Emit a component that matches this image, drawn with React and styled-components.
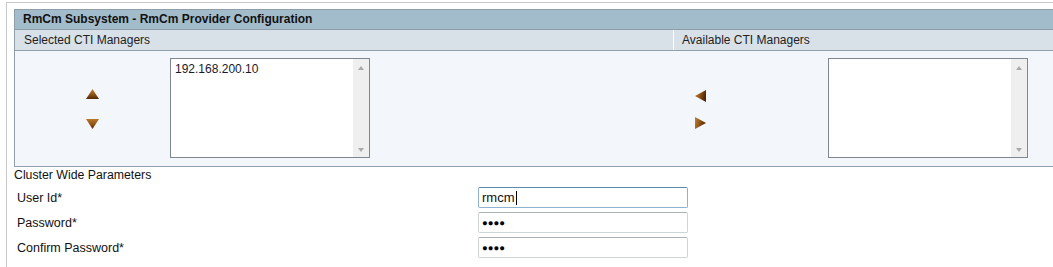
import React from 'react'
import styled, { createGlobalStyle } from 'styled-components'

const Global = createGlobalStyle`
  html, body { margin: 0; padding: 0; background: #fff; overflow: hidden; }
  body { font-family: "Liberation Sans", Arial, sans-serif; font-size: 12px; color: #111; }
`

function Arrow({ dir }) {
  const pts = {
    up: '6.5,0 13,10 0,10',
    down: '0,0 13,0 6.5,10',
    left: '11,0 11,12 0,6',
    right: '0,0 11,6 0,12',
  }[dir]
  const vertical = dir === 'up' || dir === 'down'
  const w = vertical ? 13 : 11
  const h = vertical ? 10 : 12
  const id = 'g-' + dir
  return (
    <svg width={w} height={h} viewBox={`0 0 ${w} ${h}`}>
      <defs>
        <linearGradient id={id} x1="0" y1="0" x2={vertical ? '0' : '1'} y2={vertical ? '1' : '0.3'}>
          <stop offset="0" stopColor={dir === 'down' ? '#b87828' : '#c4823a'} />
          <stop offset="0.55" stopColor="#8e5214" />
          <stop offset="1" stopColor="#4f2804" />
        </linearGradient>
      </defs>
      <polygon points={pts} fill={`url(#${id})`} />
    </svg>
  )
}

function ListBox({ items }) {
  return (
    <Box>
      <Items>
        {items.map((i) => (
          <div key={i}>{i}</div>
        ))}
      </Items>
      <Scroll>
        <Tri $up />
        <Tri />
      </Scroll>
    </Box>
  )
}

function App() {
  return (
    <>
      <Global />
      <Frame>
        <Table>
          <Header>RmCm Subsystem - RmCm Provider Configuration</Header>
          <SubRow>
            <SubCell>Selected CTI Managers</SubCell>
            <SubCell $divider>Available CTI Managers</SubCell>
          </SubRow>
          <Content>
            <Pane>
              <Arrows $gap={20}>
                <Arrow dir="up" />
                <Arrow dir="down" />
              </Arrows>
              <ListBox items={['192.168.200.10']} />
            </Pane>
            <Pane>
              <Arrows $gap={15} $left={22}>
                <Arrow dir="left" />
                <Arrow dir="right" />
              </Arrows>
              <ListBox items={[]} />
            </Pane>
          </Content>
        </Table>
        <Section>Cluster Wide Parameters</Section>
        <Form>
          <Label>User Id*</Label>
          <Field $focus>
            rmcm<Caret />
          </Field>
          <Label>Password*</Label>
          <Field>
            <Dots>●●●●</Dots>
          </Field>
          <Label>Confirm Password*</Label>
          <Field>
            <Dots>●●●●</Dots>
          </Field>
        </Form>
      </Frame>
    </>
  )
}

const Frame = styled.div`
  margin: 2px 0 0 6px;
  border-top: 1px solid #c9c9c9;
  border-left: 1px solid #c9c9c9;
  padding: 6px 0 0 7px;
  height: 266px;
  box-sizing: border-box;
`

const Table = styled.div`
  width: 1050px;
  border: 1px solid #8e9eab;
  border-right: none;
`

const Header = styled.div`
  height: 19px;
  line-height: 19px;
  padding-left: 8px;
  background: #a3bccc;
  font-weight: bold;
  color: #111;
  border-bottom: 1px solid #8e9eab;
`

const SubRow = styled.div`
  display: grid;
  grid-template-columns: 658px 1fr;
  background: #d9e1e8;
  height: 20px;
  border-bottom: 1px solid #8e9eab;
`

const SubCell = styled.div`
  line-height: 20px;
  padding-left: ${(p) => (p.$divider ? 8 : 9)}px;
  border-left: ${(p) => (p.$divider ? '1px solid #fff' : 'none')};
  color: #222;
`

const Content = styled.div`
  display: grid;
  grid-template-columns: 658px 1fr;
  background: #f3f6fa;
  height: 115px;
`

const Pane = styled.div`
  display: grid;
  grid-template-columns: 155px 200px;
  padding-top: 7px;
  align-items: start;
`

const Arrows = styled.div`
  height: 100px;
  display: flex;
  flex-direction: column;
  justify-content: center;
  align-items: ${(p) => (p.$left ? 'flex-start' : 'center')};
  padding-left: ${(p) => p.$left || 0}px;
  padding-top: 1px;
  gap: ${(p) => p.$gap}px;
  svg { display: block; }
`

const Box = styled.div`
  width: 200px;
  height: 100px;
  box-sizing: border-box;
  border: 1px solid #7d8790;
  background: #fff;
  display: flex;
`

const Items = styled.div`
  flex: 1;
  padding: 3px 4px;
  color: #1a1a2a;
  line-height: 14px;
`

const Scroll = styled.div`
  width: 16px;
  background: #efefef;
  display: flex;
  flex-direction: column;
  justify-content: space-between;
  align-items: center;
  padding: 7px 0 5px;
`

const Tri = styled.div`
  width: 0;
  height: 0;
  border-left: 3.5px solid transparent;
  border-right: 3.5px solid transparent;
  ${(p) => (p.$up ? 'border-bottom: 4px solid #a9a9a9;' : 'border-top: 4px solid #a9a9a9;')}
`

const Section = styled.div`
  margin-top: 1px;
  line-height: 15px;
  font-size: 12.3px;
  color: #111;
`

const Form = styled.div`
  display: grid;
  grid-template-columns: 461px 210px;
  row-gap: 4px;
  padding-left: 3px;
  margin-top: 4px;
  align-items: center;
`

const Label = styled.div`
  font-size: 12.5px;
  color: #111;
`

const Field = styled.div`
  height: 21px;
  box-sizing: border-box;
  border: 1px solid ${(p) => (p.$focus ? '#8fb2cf' : '#cfd4d8')};
  border-top-color: ${(p) => (p.$focus ? '#5d8bb0' : '#aeb2b6')};
  border-radius: 2px;
  background: #fff;
  padding: 0 3px;
  display: flex;
  align-items: center;
  font-size: 13px;
  color: #111;
`

const Caret = styled.span`
  display: inline-block;
  width: 1px;
  height: 14px;
  background: #000;
  margin-left: 1px;
`

const Dots = styled.span`
  font-size: 9.5px;
  color: #000;
`

export default App
